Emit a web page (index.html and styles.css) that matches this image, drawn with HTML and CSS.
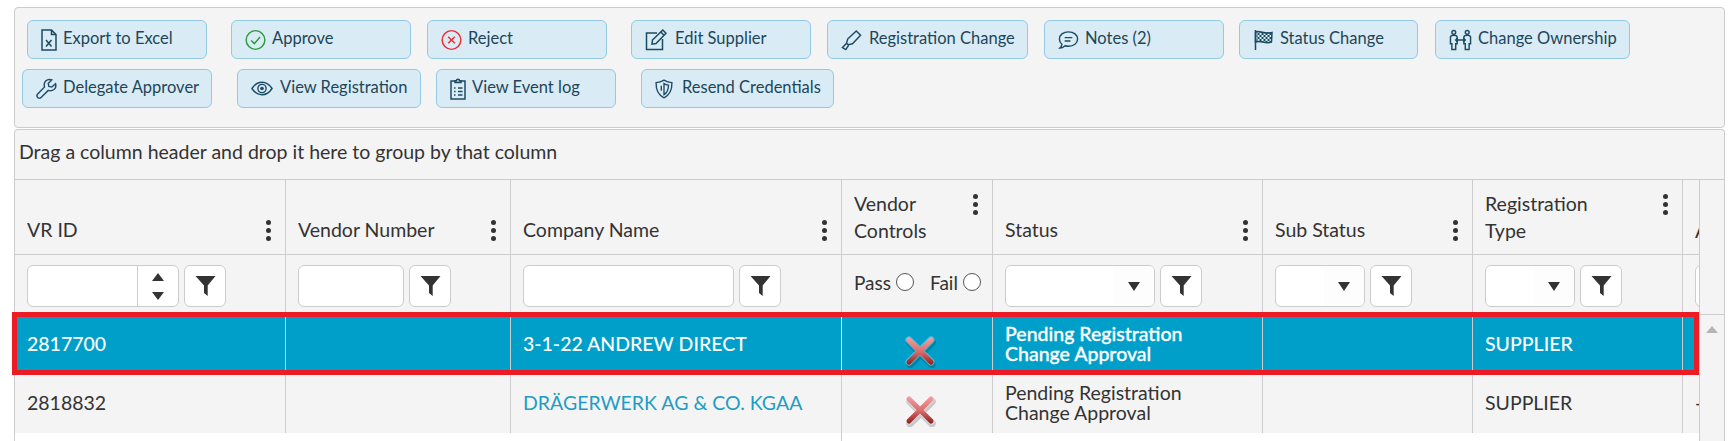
FILE: index.html
```html
<!DOCTYPE html>
<html lang="en">
<head>
<meta charset="utf-8">
<title>Vendor registrations</title>
<link rel="stylesheet" href="styles.css">
</head>
<body>
<svg class="defs" width="0" height="0" aria-hidden="true">
  <defs>
    <linearGradient id="xgrad" gradientUnits="userSpaceOnUse" x1="0" y1="3" x2="0" y2="29">
      <stop offset="0" stop-color="#f09a9a"/>
      <stop offset="0.5" stop-color="#dc6a6a"/>
      <stop offset="1" stop-color="#8a1c1c"/>
    </linearGradient>
    <pattern id="check" width="4" height="4" patternUnits="userSpaceOnUse">
      <rect width="2" height="2" fill="#1d4a63"/>
      <rect x="2" y="2" width="2" height="2" fill="#1d4a63"/>
    </pattern>
    <symbol id="redx" viewBox="0 0 32 32">
      <g stroke-linecap="round" fill="none">
        <path d="M5 5L27 27M27 5L5 27" stroke="#000" stroke-opacity=".18" stroke-width="7.5" transform="translate(1 1.5)"/>
        <path d="M5 4L27 26M27 4L5 26" stroke="#fff" stroke-opacity=".35" stroke-width="7"/>
        <path d="M5 4L27 26M27 4L5 26" stroke="url(#xgrad)" stroke-width="5"/>
      </g>
    </symbol>
    <symbol id="funnel" viewBox="0 0 21 22">
      <path d="M.5 1H20.500L12.700 10.500V21L9 18V10.500Z" fill="#333"/>
    </symbol>
  </defs>
</svg>

<main class="page">
  <section class="toolbar">
    <div class="btn-row">
      <button class="btn b-export"><svg class="ico i-narrow" viewBox="0 0 16 22"><path d="M1 1H10.5L15 5.5V21H1Z M10.5 1V5.5H15"/><path d="M5 11L10.5 17.5M10.5 11L5 17.5"/></svg>Export to Excel</button>
      <button class="btn b-approve"><svg class="ico i-wide" viewBox="0 0 22 22"><circle class="s-green" cx="11" cy="11" r="9.8"/><path class="s-green" d="M6.5 11.5L9.8 14.8L15.8 7.8"/></svg>Approve</button>
      <button class="btn b-reject"><svg class="ico i-wide" viewBox="0 0 22 22"><circle class="s-red" cx="11" cy="11" r="9.8"/><path class="s-red" d="M7.5 7.5L14.5 14.5M14.5 7.5L7.5 14.5"/></svg>Reject</button>
      <button class="btn b-edit"><svg class="ico i-edit" viewBox="0 0 22 22"><path d="M12 4H1.5V20.5H17.5V10"/><path d="M7.5 11L17.8 1L21 4.2L11 14.5L7 15.2Z M15.8 3L19 6.2"/></svg>Edit Supplier</button>
      <button class="btn b-regchange"><svg class="ico i-wide" viewBox="0 0 22 22"><path d="M7 10L16 1.5L20.5 6L12 15L7.5 16L5.8 14.5Z M5.8 14.5L1.5 19L5 21L8 16.5"/></svg>Registration Change</button>
      <button class="btn b-notes"><svg class="ico i-wide" viewBox="0 0 22 22"><path d="M11 2.5C16.5 2.5 20.5 5.6 20.5 10S16.5 17.5 11 17.5C9.7 17.5 8.5 17.3 7.4 17C6 18.3 4 19.5 2 19.5C3.4 18.2 4 16.8 4.1 15.4C2.4 14 1.5 12.2 1.5 10C1.5 5.6 5.5 2.5 11 2.5Z"/><path d="M7 8.5H15M7 12H13"/></svg>Notes (2)</button>
      <button class="btn b-status"><svg class="ico i-wide" viewBox="0 0 20 22"><path d="M2 1V21"/><path d="M2 3C7 1 11 6 18.5 3.5L18 13C12 15.5 7 11 2 13Z"/><rect class="checker" x="3" y="3" width="15" height="10"/></svg>Status Change</button>
      <button class="btn b-owner"><svg class="ico i-owner" viewBox="0 0 24 22"><circle cx="5" cy="3" r="2"/><circle cx="19" cy="3" r="2"/><path d="M1.5 8C1.5 6.5 3 6 5 6S8.5 6.5 8.5 8V15H7V21H3V15H1.5Z"/><path d="M22.5 8C22.5 6.5 21 6 19 6S15.500 6.500 15.500 8V15H17V21H21V15H22.500Z"/><path d="M7 11H17M9 9L7 11L9 13M15 9L17 11L15 13"/></svg>Change Ownership</button>
    </div>
    <div class="btn-row">
      <button class="btn b-delegate"><svg class="ico i-wide" viewBox="0 0 22 22"><path d="M20.5 5.500L16.500 9L13.500 8.300L12.800 5.300L16.500 1.500C13.500 .5 10 1.500 9 4.500C8.500 6 8.500 7.500 9 8.800L1.800 16.200C.8 17.200 .8 18.700 1.800 19.800S4.300 20.800 5.300 19.800L12.800 12.500C14 13 15.800 13 17 12.500C20 11.300 21.300 8.500 20.500 5.500Z"/></svg>Delegate Approver</button>
      <button class="btn b-viewreg"><svg class="ico i-eye" viewBox="0 0 24 16"><path d="M1 8C4 3.500 7.500 1.200 12 1.200S20 3.500 23 8C20 12.500 16.500 14.800 12 14.800S4 12.500 1 8Z"/><circle cx="12" cy="8" r="4.500"/><circle class="dot" cx="12" cy="8" r="2"/></svg>View Registration</button>
      <button class="btn b-event"><svg class="ico i-narrow" viewBox="0 0 16 22"><path d="M5 3H1V21H15V3H11"/><path d="M5 4.500V2.800H6.500C6.500 .8 9.500 .8 9.500 2.800H11V4.500Z"/><path d="M4 10H5.500M8 10H12.500M4 13.500H5.500M8 13.500H12.500M4 17H5.500M8 17H12.500"/></svg>View Event log</button>
      <button class="btn b-resend"><svg class="ico i-shield" viewBox="0 0 20 22"><path d="M10 1.200C12.500 2.800 15.500 3.800 18.800 4C19 11.500 16.500 17.500 10 20.800C3.500 17.500 1 11.500 1.200 4C4.500 3.800 7.500 2.800 10 1.200Z"/><path d="M10 5C11 5.800 13 6.500 15 6.700C15 11 13.500 15 10 17.200Z M7 7.500V13"/></svg>Resend Credentials</button>
    </div>
  </section>

  <section class="grid">
    <div class="group-bar">Drag a column header and drop it here to group by that column</div>
    <div class="grid-main">
      <div class="grid-scroll">
        <table class="tbl">
          <colgroup>
            <col class="c1"><col class="c2"><col class="c3"><col class="c4"><col class="c5"><col class="c6"><col class="c7"><col class="c8">
          </colgroup>
          <thead>
            <tr class="head-row">
              <th><div class="hcell"><span>VR ID</span><span class="kebab"><i></i><i></i><i></i></span></div></th>
              <th><div class="hcell"><span>Vendor Number</span><span class="kebab"><i></i><i></i><i></i></span></div></th>
              <th><div class="hcell"><span>Company Name</span><span class="kebab"><i></i><i></i><i></i></span></div></th>
              <th><div class="hcell"><span>Vendor<br>Controls</span><span class="kebab"><i></i><i></i><i></i></span></div></th>
              <th><div class="hcell"><span>Status</span><span class="kebab"><i></i><i></i><i></i></span></div></th>
              <th><div class="hcell"><span>Sub Status</span><span class="kebab"><i></i><i></i><i></i></span></div></th>
              <th><div class="hcell"><span>Registration<br>Type</span><span class="kebab"><i></i><i></i><i></i></span></div></th>
              <th><div class="hcell"><span>Assigned</span></div></th>
            </tr>
            <tr class="filter-row">
              <td><div class="fcell">
                <div class="field f-id"><span class="field-main"></span><span class="spin"><i class="up"></i><i class="down"></i></span></div>
                <span class="fbtn"><svg><use href="#funnel"/></svg></span>
              </div></td>
              <td><div class="fcell"><div class="field f-vn"></div><span class="fbtn"><svg><use href="#funnel"/></svg></span></div></td>
              <td><div class="fcell"><div class="field f-co"></div><span class="fbtn"><svg><use href="#funnel"/></svg></span></div></td>
              <td><div class="radios"><span class="rlabel">Pass</span><i class="radio"></i><span class="rlabel r2">Fail</span><i class="radio"></i></div></td>
              <td><div class="fcell"><div class="field f-st"><span class="sel-main"></span><span class="arrow"></span></div><span class="fbtn"><svg><use href="#funnel"/></svg></span></div></td>
              <td><div class="fcell"><div class="field f-sm"><span class="sel-main"></span><span class="arrow"></span></div><span class="fbtn"><svg><use href="#funnel"/></svg></span></div></td>
              <td><div class="fcell"><div class="field f-sm"><span class="sel-main"></span><span class="arrow"></span></div><span class="fbtn"><svg><use href="#funnel"/></svg></span></div></td>
              <td><div class="fcell"><div class="field f-vn"></div></div></td>
            </tr>
          </thead>
          <tbody>
            <tr class="row selected">
              <td>2817700</td>
              <td></td>
              <td class="before-x">3-1-22 ANDREW DIRECT</td>
              <td class="xcell"><svg class="xicon"><use href="#redx"/></svg></td>
              <td class="two">Pending Registration<br>Change Approval</td>
              <td></td>
              <td>SUPPLIER</td>
              <td></td>
            </tr>
            <tr class="row">
              <td>2818832</td>
              <td></td>
              <td><a class="link" href="#">DRÄGERWERK AG &amp; CO. KGAA</a></td>
              <td class="xcell"><svg class="xicon"><use href="#redx"/></svg></td>
              <td class="two">Pending Registration<br>Change Approval</td>
              <td></td>
              <td>SUPPLIER</td>
              <td>-</td>
            </tr>
            <tr class="tail">
              <td></td><td></td><td class="tail-line"></td><td></td><td></td><td></td><td></td><td></td>
            </tr>
          </tbody>
        </table>
      </div>
      <aside class="scroll-col"><div class="sc-head"></div><span class="sc-up"></span></aside>
    </div>
  </section>
  <div class="highlight"></div>
</main>
</body>
</html>
```

FILE: styles.css
```css
* { box-sizing: border-box; }
html, body { margin: 0; padding: 0; height: 441px; overflow: hidden; background: #fff; }
body { font-family: Lato, "Open Sans", sans-serif; color: #333; }
.defs { position: absolute; }

.page { position: relative; height: 441px; padding: 7px 8px 0 14px; overflow: hidden; }

/* toolbar */
.toolbar {
  height: 121px; background: #f4f4f4; border: 1px solid #ccc; border-radius: 4px;
  padding: 12px 0 0 12px; display: flex; flex-direction: column; gap: 10px;
}
.btn-row { display: flex; height: 39px; }
.btn {
  height: 39px; padding: 0 0 4px 13px; display: flex; align-items: center; gap: 6px;
  background: #d9ecf5; border: 1px solid #93c9e2; border-radius: 6px;
  font: 400 16.5px Lato, sans-serif; color: #1e4559; white-space: nowrap;
}
.ico { flex: none; height: 22px; fill: none; stroke: #1d4a63; stroke-width: 1.5; margin-top: 4px; }
.i-narrow { width: 16px; }
.i-wide { width: 21px; }
.i-edit { width: 22px; }
.i-owner { width: 23px; }
.i-eye { width: 22px; height: 15px; }
.i-shield { width: 18px; }
.s-green { stroke: #2a9a3c; }
.s-red { stroke: #ee2a30; }
.checker { fill: url(#check); stroke: none; }
.dot { fill: #1d4a63; stroke: none; }

.b-export { width: 180px; }
.b-approve { width: 180px; margin-left: 24px; }
.b-reject { width: 180px; margin-left: 16px; }
.b-edit { width: 180px; margin-left: 24px; gap: 8px; }
.b-regchange { width: 201px; margin-left: 16px; gap: 7px; }
.b-notes { width: 180px; margin-left: 16px; }
.b-status { width: 179px; margin-left: 15px; }
.b-owner { width: 195px; margin-left: 17px; }
.b-delegate { width: 190px; margin-left: -5px; }
.b-viewreg { width: 184px; margin-left: 25px; gap: 7px; }
.b-event { width: 180px; margin-left: 15px; }
.b-resend { width: 193px; margin-left: 25px; gap: 9px; }

/* grid */
.grid {
  height: 320px; margin-top: 1px; background: #f4f4f4;
  border: 1px solid #ccc; border-bottom: 0; border-radius: 4px 4px 0 0;
  display: flex; flex-direction: column;
}
.group-bar { height: 49px; padding: 7px 0 0 4px; font-size: 19.5px; line-height: 30px; color: #333; }
.grid-main { display: flex; flex: 1; min-height: 0; }
.grid-scroll { width: 1684px; overflow: hidden; background: #fff; }
.tbl { table-layout: fixed; width: 1768px; border-collapse: separate; border-spacing: 0; font-size: 19.5px; }
.c1 { width: 271px; } .c2 { width: 225px; } .c3 { width: 331px; } .c4 { width: 151px; }
.c5 { width: 270px; } .c6 { width: 210px; } .c7 { width: 210px; } .c8 { width: 100px; }
.tbl th, .tbl td { border-right: 1px solid #ccc; padding: 0 0 0 12px; background: #f4f4f4; text-align: left; }
.head-row th { height: 76px; border-top: 1px solid #ccc; border-bottom: 1px solid #ccc; vertical-align: bottom; font-weight: 400; padding-bottom: 10px; }
.hcell { display: flex; justify-content: space-between; align-items: flex-start; line-height: 27px; padding-right: 14px; white-space: nowrap; }
.kebab { display: flex; flex-direction: column; justify-content: center; gap: 3px; height: 27px; margin-top: 1px; }
.kebab i { display: block; width: 5px; height: 5px; border-radius: 50%; background: #333; }

.filter-row td { height: 60px; vertical-align: top; padding-top: 10px; }
.fcell { display: flex; gap: 5px; }
.field { height: 42px; background: #fff; border: 1px solid #ccc; border-radius: 6px; display: flex; overflow: hidden; }
.f-id { width: 152px; } .f-vn { width: 106px; } .f-co { width: 211px; } .f-st { width: 150px; } .f-sm { width: 90px; }
.field-main { flex: 1; border-right: 1px solid #ccc; }
.spin { width: 40px; display: flex; flex-direction: column; align-items: center; justify-content: center; gap: 11px; }
.spin i { display: block; width: 0; height: 0; border-left: 6px solid transparent; border-right: 6px solid transparent; }
.spin .up { border-bottom: 8px solid #333; }
.spin .down { border-top: 8px solid #333; }
.sel-main { flex: 1; }
.arrow { width: 40px; display: flex; align-items: center; justify-content: center; background: #fdfdfd; }
.arrow::after { content: ""; width: 0; height: 0; border-left: 6px solid transparent; border-right: 6px solid transparent; border-top: 9px solid #333; }
.fbtn { flex: none; width: 42px; height: 42px; background: #fff; border: 1px solid #ccc; border-radius: 6px; display: flex; align-items: center; justify-content: center; }
.fbtn svg { width: 21px; height: 22px; }
.radios { display: flex; align-items: flex-start; padding-top: 6px; font-size: 19px; line-height: 24px; }
.radio { width: 18px; height: 18px; margin: 2px 0 0 5px; border: 1px solid #555; border-radius: 50%; background: #fff; }
.r2 { margin-left: 16px; }

.row td { height: 59px; vertical-align: middle; line-height: 20px; padding-bottom: 2px; }
.row .xcell { padding: 0; text-align: center; }
.xicon { display: block; width: 32px; height: 32px; margin: 15px auto 0 62px; }
.tbl .selected td { background: #009fca; color: #fff; font-weight: 500; }
.tbl .selected .before-x { border-right-color: #fff; }
.tbl .selected .two { -webkit-text-stroke: .3px #fff; }
.link { color: #1f9cc4; text-decoration: none; }
.tbl .tail td { height: 20px; background: #fff; border-right: 0; }
.tbl .tail .tail-line { border-right: 1px solid #ccc; }

.scroll-col { flex: 1; border-left: 1px solid #ccc; position: relative; background: #f4f4f4; }
.sc-head { height: 136px; border-top: 1px solid #ccc; border-bottom: 1px solid #ccc; }
.sc-up { position: absolute; left: 6px; top: 147px; width: 0; height: 0; border-left: 6px solid transparent; border-right: 6px solid transparent; border-bottom: 7px solid #b5b5b5; }

.highlight { position: absolute; left: 12px; top: 312px; width: 1687px; height: 63px; border: 5px solid #ed1c24; }
```
